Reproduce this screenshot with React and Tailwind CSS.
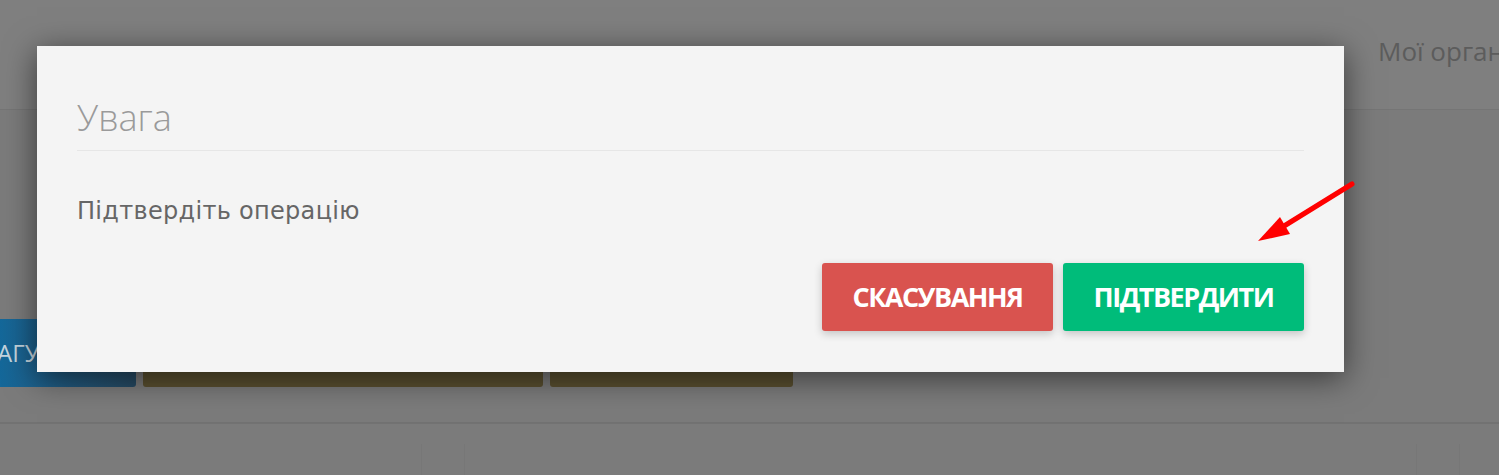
import React from "react";

const App = () => {
  return (
    <div
      className="relative w-[1499px] h-[475px] overflow-hidden bg-[#7b7b7b]"
      style={{ fontFamily: "'Open Sans', sans-serif" }}
    >
      {/* page behind the backdrop */}
      <div className="flex h-[110px] items-start border-b border-[#757575] bg-[#7f7f7f] pl-[1378px] pt-[32px]">
        <span className="whitespace-nowrap text-[26px] text-[#5c5c5c]">Мої організації</span>
      </div>

      <div className="mt-[209px] flex gap-[7px]">
        <div className="flex h-[68px] w-[136px] items-center rounded-r-[3px] bg-gradient-to-r from-[#14689a] to-[#264a63]">
          <span className="-ml-[3px] text-[24px] text-[#c4d4de]">АГУ</span>
        </div>
        <div className="h-[68px] w-[400px] rounded-[3px] bg-[#5a5030]"></div>
        <div className="h-[68px] w-[243px] rounded-[3px] bg-[#5a5030]"></div>
      </div>

      <div className="mt-[35px] border-t-2 border-[#727272]"></div>
      <div className="flex h-[60px] pt-[20px]">
        <div className="ml-[421px] w-[44px] border-x border-[#777777]"></div>
        <div className="ml-[951px] w-[44px] border-x border-[#777777]"></div>
      </div>

      {/* modal */}
      <div className="absolute left-[37px] top-[46px] flex h-[326px] w-[1307px] flex-col bg-[#f4f4f4] px-[40px] shadow-[0_6px_30px_rgba(0,0,0,0.55)]">
        <div className="border-b border-[#e6e6e6] pt-[51px] pb-[11px]">
          <h4 className="text-[36px] font-light leading-[42px] text-[#9a9a9a]">Увага</h4>
        </div>
        <p
          className="mt-[46px] text-[24px] leading-[28px] text-[#666666] tracking-[0.3px]"
          style={{ fontFamily: "'DejaVu Sans', 'Liberation Sans', sans-serif" }}
        >
          Підтвердіть операцію
        </p>
        <div className="mt-[38px] flex justify-end gap-[10px]">
          <button className="flex h-[68px] w-[231px] items-center justify-center rounded-[3px] bg-[#d9534f] text-[27px] font-bold tracking-[-1.5px] text-white shadow-[0_3px_8px_rgba(0,0,0,0.2)]">
            СКАСУВАННЯ
          </button>
          <button className="flex h-[68px] w-[241px] items-center justify-center rounded-[3px] bg-[#00bc7a] text-[27px] font-bold tracking-[-1.5px] text-white shadow-[0_3px_8px_rgba(0,0,0,0.2)]">
            ПІДТВЕРДИТИ
          </button>
        </div>
      </div>

      {/* annotation arrow */}
      <svg className="absolute left-0 top-0" width="1499" height="475">
        <line x1="1352" y1="184" x2="1276" y2="231" stroke="#ff0000" strokeWidth="5" strokeLinecap="round" />
        <polygon points="1258,241 1280,217 1290,234" fill="#ff0000" />
      </svg>
    </div>
  );
};

export default App;
